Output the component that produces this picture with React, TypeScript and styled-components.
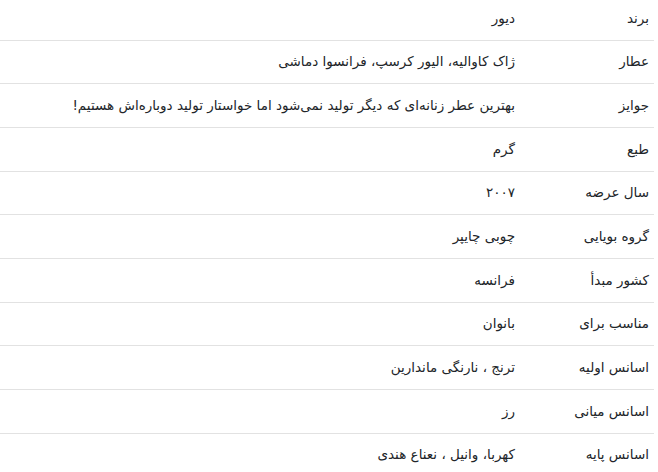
import React from "react";
import styled, { createGlobalStyle } from "styled-components";

const Global = createGlobalStyle`
  html, body {
    margin: 0;
    padding: 0;
    background: #fff;
  }
  body {
    font-family: "DejaVu Sans", "Noto Sans", sans-serif;
    color: #212529;
  }
`;

const Wrap = styled.div`
  direction: rtl;
  width: 654px;
  margin-top: -3px;
`;

const Table = styled.table`
  width: 100%;
  border-collapse: collapse;
  font-size: 13.5px;
`;

const Row = styled.tr`
  border-bottom: 1px solid #e2e2e2;
`;

const Cell = styled.td<{ $label?: boolean }>`
  padding: 11.5px 5px;
  line-height: 19.67px;
  text-align: right;
  vertical-align: middle;
  width: ${(p) => (p.$label ? "124px" : "auto")};
`;

const rows: [string, string][] = [
  ["برند", "دیور"],
  ["عطار", "ژاک کاوالیه، الیور کرسپ، فرانسوا دماشی"],
  ["جوایز", "بهترین عطر زنانه‌ای که دیگر تولید نمی‌شود اما خواستار تولید دوباره‌اش هستیم!"],
  ["طبع", "گرم"],
  ["سال عرضه", "۲۰۰۷"],
  ["گروه بویایی", "چوبی چایپر"],
  ["کشور مبدأ", "فرانسه"],
  ["مناسب برای", "بانوان"],
  ["اسانس اولیه", "ترنج ، نارنگی ماندارین"],
  ["اسانس میانی", "رز"],
  ["اسانس پایه", "کهربا، وانیل ، نعناع هندی"],
];

export default function App() {
  return (
    <>
      <Global />
      <Wrap>
        <Table>
          <tbody>
            {rows.map(([k, v]) => (
              <Row key={k}>
                <Cell $label>{k}</Cell>
                <Cell>{v}</Cell>
              </Row>
            ))}
          </tbody>
        </Table>
      </Wrap>
    </>
  );
}
